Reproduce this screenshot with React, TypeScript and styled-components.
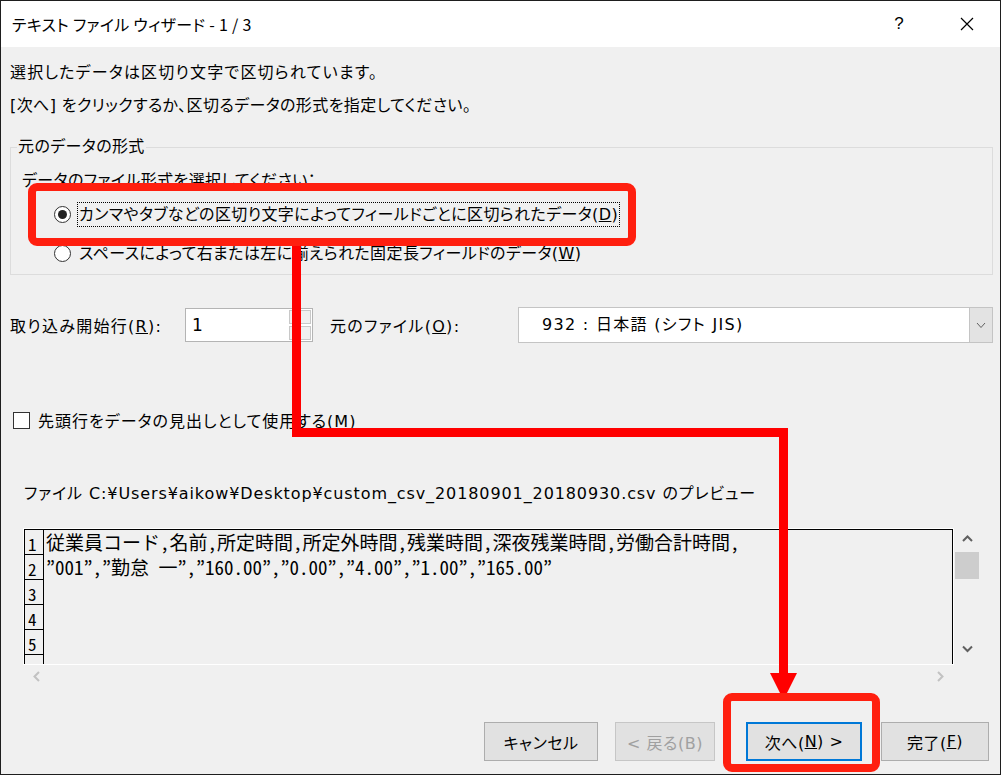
import styled, { createGlobalStyle } from "styled-components";

const GlobalStyle = createGlobalStyle`
  html, body {
    margin: 0;
    padding: 0;
    background: #f0f0f0;
  }
  body {
    font-family: "DejaVu Sans", "Noto Sans CJK JP", sans-serif;
    font-feature-settings: "palt" 1;
    color: #000;
  }
  * {
    box-sizing: border-box;
  }
`;

const Window = styled.div`
  position: relative;
  width: 1001px;
  height: 775px;
  border: 1px solid #1e1e1e;
  background: #f0f0f0;
  display: flex;
  flex-direction: column;
  overflow: hidden;
`;

const TitleBar = styled.div`
  height: 46px;
  flex-shrink: 0;
  background: #fff;
  display: flex;
  align-items: center;
  padding: 0 10px 0 11px;
  font-size: 16px;
`;

const TitleText = styled.span`
  flex: 1;
  line-height: 24px;
  font-family: "Noto Sans CJK JP", sans-serif;
  letter-spacing: 0.3px;
`;

const TitleButtons = styled.div`
  display: flex;
  gap: 22px;
`;

const TitleButton = styled.div`
  width: 46px;
  height: 46px;
  display: flex;
  align-items: center;
  justify-content: center;
  font-size: 17px;
  font-family: "Liberation Sans", sans-serif;
`;

const Body = styled.div`
  flex: 1;
  display: flex;
  flex-direction: column;
  padding: 0 7px 0 9px;
  font-size: 16px;
  letter-spacing: 0.4px;
`;

type lineProps = {
    $mt?: number;
    $ls?: number;
}

const Line = styled.div<lineProps>`
  margin-top: ${(props) => props.$mt ?? 0}px;
  letter-spacing: ${(props) => props.$ls ?? 0.4}px;
  line-height: 24px;
  height: 24px;
  white-space: nowrap;
`;

const Group = styled.fieldset`
  margin: 17px 0 0 0;
  padding: 0 0 8px 6px;
  border: 1px solid #dcdcdc;
  min-width: 0;
`;

const Legend = styled.legend`
  padding: 0 1px;
  line-height: 24px;
`;

const Prompt = styled.div`
  margin: 10px 0 0 5px;
  line-height: 24px;
  height: 24px;
`;

const RadioRow = styled.div<lineProps>`
  margin: ${(props) => props.$mt ?? 0}px 0 0 37px;
  height: 25px;
  display: flex;
  align-items: center;
  gap: 6px;
`;

type radioProps = {
    $checked?: boolean;
}

const Radio = styled.span<radioProps>`
  width: 17px;
  height: 17px;
  border-radius: 50%;
  border: 1px solid #333;
  background: #fff;
  display: flex;
  align-items: center;
  justify-content: center;
  &::after {
    content: "";
    width: 9px;
    height: 9px;
    border-radius: 50%;
    background: ${(props) => (props.$checked ? "#222" : "transparent")};
  }
`;

type labelProps = {
    $focused?: boolean;
}

const RadioLabel = styled.span<labelProps>`
  height: 25px;
  line-height: 23px;
  padding: 0 1px;
  border: 1px dotted ${(props) => (props.$focused ? "#000" : "transparent")};
  white-space: nowrap;
`;

const FieldRow = styled.div`
  margin-top: 32px;
  height: 36px;
  display: flex;
  align-items: center;
  letter-spacing: 1.3px;
`;

type fieldLabelProps = {
    $w: number;
    $ml?: number;
}

const FieldLabel = styled.span<fieldLabelProps>`
  width: ${(props) => props.$w}px;
  margin-left: ${(props) => props.$ml ?? 0}px;
  white-space: nowrap;
`;

const SpinInput = styled.div`
  width: 128px;
  height: 34px;
  display: flex;
  border: 1px solid #b4b4b4;
  background: #fff;
`;

const SpinValue = styled.div`
  flex: 1;
  padding-left: 6px;
  line-height: 32px;
  font-size: 17px;
`;

const SpinButtons = styled.div`
  width: 24px;
  display: flex;
  flex-direction: column;
  gap: 2px;
  padding: 1px;
`;

const SpinButton = styled.div`
  flex: 1;
  border: 1px solid #c8c8c8;
  background: #f0f0f0;
`;

const Combo = styled.div`
  flex: 1;
  height: 36px;
  display: flex;
  border: 1px solid #c4c4c4;
  background: #fff;
`;

const ComboValue = styled.div`
  flex: 1;
  padding-left: 23px;
  line-height: 34px;
  white-space: nowrap;
`;

const ComboButton = styled.div`
  width: 23px;
  background: #e3e3e3;
  border-left: 1px solid #c4c4c4;
  display: flex;
  align-items: center;
  justify-content: center;
`;

const CheckRow = styled.div`
  margin: 65px 0 0 3px;
  height: 24px;
  display: flex;
  align-items: center;
  gap: 8px;
  letter-spacing: 1px;
`;

const CheckBox = styled.span`
  width: 17px;
  height: 17px;
  border: 1px solid #333;
  background: #fff;
`;

const PreviewTitle = styled.div`
  margin: 50px 0 0 14px;
  line-height: 24px;
  height: 24px;
  white-space: nowrap;
  letter-spacing: 0.9px;
`;

const PreviewRow = styled.div`
  margin-top: 22px;
  display: flex;
  align-items: flex-start;
  letter-spacing: 0;
`;

const PreviewFrame = styled.div`
  margin-left: 13px;
  width: 931px;
  height: 137px;
  border: 1px solid #fff;
`;

const PreviewInner = styled.div`
  height: 100%;
  border: 1px solid #000;
  border-bottom: none;
  overflow: hidden;
`;

const DataRow = styled.div`
  display: flex;
  height: 25px;
`;

const RowNumber = styled.div`
  width: 19px;
  flex-shrink: 0;
  border-right: 1px solid #000;
  border-bottom: 1px solid #000;
  padding-left: 3px;
  font-family: "Noto Sans CJK JP", sans-serif;
  font-size: 17px;
  line-height: 27px;
  font-feature-settings: "hwid" 1;
`;

const RowText = styled.div`
  padding-left: 2px;
  font-family: "Noto Sans CJK JP", sans-serif;
  font-size: 19px;
  line-height: 24px;
  white-space: nowrap;
  font-feature-settings: "hwid" 1;
`;

const VScroll = styled.div`
  margin-left: 1px;
  width: 24px;
  height: 132px;
  display: flex;
  flex-direction: column;
`;

const ArrowCell = styled.div`
  height: 22px;
  display: flex;
  align-items: center;
  justify-content: center;
`;

const Thumb = styled.div`
  margin-top: 2px;
  height: 27px;
  background: #cdcdcd;
`;

const Spacer = styled.div`
  flex: 1;
`;

const HScroll = styled.div`
  margin-left: 13px;
  width: 931px;
  height: 22px;
  display: flex;
  justify-content: space-between;
`;

const HArrow = styled.div`
  width: 28px;
  display: flex;
  align-items: center;
  justify-content: center;
`;

const ButtonRow = styled.div`
  margin-top: 35px;
  display: flex;
  justify-content: flex-end;
  padding-right: 4px;
`;

type buttonProps = {
    $w: number;
    $ml?: number;
    $default?: boolean;
    $disabled?: boolean;
}

const Button = styled.div<buttonProps>`
  width: ${(props) => props.$w}px;
  margin-left: ${(props) => props.$ml ?? 0}px;
  height: 39px;
  display: flex;
  align-items: center;
  justify-content: center;
  background: #e1e1e1;
  border: ${(props) =>
    props.$default ? "2px solid #0078d7" : props.$disabled ? "1px solid #c6c6c6" : "1px solid #adadad"};
  color: ${(props) => (props.$disabled ? "#a0a0a0" : "#000")};
  white-space: nowrap;
  letter-spacing: 0.5px;
`;

const Overlay = styled.svg`
  position: absolute;
  top: -1px;
  left: -1px;
  width: 1001px;
  height: 775px;
  pointer-events: none;
`;

function Chevron({ dir, color }: { dir: "up" | "down" | "left" | "right"; color: string }) {
    const pts = {
        up: "1,7 5.5,2.5 10,7",
        down: "1,2.5 5.5,7 10,2.5",
        left: "7,1 2.5,5.5 7,10",
        right: "3,1 7.5,5.5 3,10",
    }[dir];
    return (
        <svg width="11" height="11" viewBox="0 0 11 11">
            <polyline points={pts} fill="none" stroke={color} strokeWidth="2" />
        </svg>
    );
}

const rows = [
    "従業員コード,名前,所定時間,所定外時間,残業時間,深夜残業時間,労働合計時間,",
    "”001”,”勤怠 一”,”160.00”,”0.00”,”4.00”,”1.00”,”165.00”",
    "",
    "",
    "",
    "",
];

export default function App() {
    return (
        <>
            <GlobalStyle />
            <Window>
                <TitleBar>
                    <TitleText>テキスト ファイル ウィザード - 1 / 3</TitleText>
                    <TitleButtons>
                        <TitleButton>?</TitleButton>
                        <TitleButton>
                            <svg width="14" height="14" viewBox="0 0 14 14">
                                <path d="M1 1 L13 13 M13 1 L1 13" stroke="#000" strokeWidth="1.2" />
                            </svg>
                        </TitleButton>
                    </TitleButtons>
                </TitleBar>
                <Body>
                    <Line $mt={14} $ls={1.2}>選択したデータは区切り文字で区切られています。</Line>
                    <Line $mt={9}>[次へ] をクリックするか、区切るデータの形式を指定してください。</Line>
                    <Group>
                        <Legend>元のデータの形式</Legend>
                        <Prompt>データのファイル形式を選択してください：</Prompt>
                        <RadioRow $mt={9}>
                            <Radio $checked />
                            <RadioLabel $focused>
                                カンマやタブなどの区切り文字によってフィールドごとに区切られたデータ(<u>D</u>)
                            </RadioLabel>
                        </RadioRow>
                        <RadioRow $mt={14}>
                            <Radio />
                            <RadioLabel>
                                スペースによって右または左に揃えられた固定長フィールドのデータ(<u>W</u>)
                            </RadioLabel>
                        </RadioRow>
                    </Group>
                    <FieldRow>
                        <FieldLabel $w={175}>
                            取り込み開始行(<u>R</u>):
                        </FieldLabel>
                        <SpinInput>
                            <SpinValue>1</SpinValue>
                            <SpinButtons>
                                <SpinButton />
                                <SpinButton />
                            </SpinButtons>
                        </SpinInput>
                        <FieldLabel $w={188} $ml={17}>
                            元のファイル(<u>O</u>):
                        </FieldLabel>
                        <Combo>
                            <ComboValue>932 : 日本語 (シフト JIS)</ComboValue>
                            <ComboButton>
                                <svg width="10" height="7" viewBox="0 0 10 7">
                                    <polyline points="1,1 5,5.5 9,1" fill="none" stroke="#606060" strokeWidth="1" />
                                </svg>
                            </ComboButton>
                        </Combo>
                    </FieldRow>
                    <CheckRow>
                        <CheckBox />
                        <span>
                            先頭行をデータの見出しとして使用する(<u>M</u>)
                        </span>
                    </CheckRow>
                    <PreviewTitle>
                        ファイル C:¥Users¥aikow¥Desktop¥custom_csv_20180901_20180930.csv のプレビュー
                    </PreviewTitle>
                    <PreviewRow>
                        <PreviewFrame>
                            <PreviewInner>
                                {rows.map((text, i) => (
                                    <DataRow key={i}>
                                        <RowNumber>{i < 5 ? i + 1 : ""}</RowNumber>
                                        <RowText>{text}</RowText>
                                    </DataRow>
                                ))}
                            </PreviewInner>
                        </PreviewFrame>
                        <VScroll>
                            <ArrowCell>
                                <Chevron dir="up" color="#606060" />
                            </ArrowCell>
                            <Thumb />
                            <Spacer />
                            <ArrowCell>
                                <Chevron dir="down" color="#606060" />
                            </ArrowCell>
                        </VScroll>
                    </PreviewRow>
                    <HScroll>
                        <HArrow>
                            <Chevron dir="left" color="#c2c2c2" />
                        </HArrow>
                        <HArrow>
                            <Chevron dir="right" color="#c2c2c2" />
                        </HArrow>
                    </HScroll>
                    <ButtonRow>
                        <Button $w={114}>キャンセル</Button>
                        <Button $w={100} $ml={17} $disabled>
                            &lt; 戻る(B)
                        </Button>
                        <Button $w={116} $ml={31} $default>
                            次へ(<u>N</u>) &gt;
                        </Button>
                        <Button $w={108} $ml={19}>
                            完了(<u>F</u>)
                        </Button>
                    </ButtonRow>
                </Body>
                <Overlay viewBox="0 0 1001 775">
                    <rect x="32" y="187" width="600" height="55" rx="5" fill="none" stroke="#ff1f0f" strokeWidth="8" />
                    <rect x="292" y="246" width="9" height="191" fill="#ff0000" />
                    <rect x="292" y="428" width="496" height="9" fill="#ff0000" />
                    <rect x="779" y="428" width="9" height="247" fill="#ff0000" />
                    <polygon points="770,673 797,673 783.5,700" fill="#ff0000" />
                    <rect x="727" y="697" width="149" height="71" rx="5" fill="none" stroke="#ff1f0f" strokeWidth="8" />
                </Overlay>
            </Window>
        </>
    );
}
